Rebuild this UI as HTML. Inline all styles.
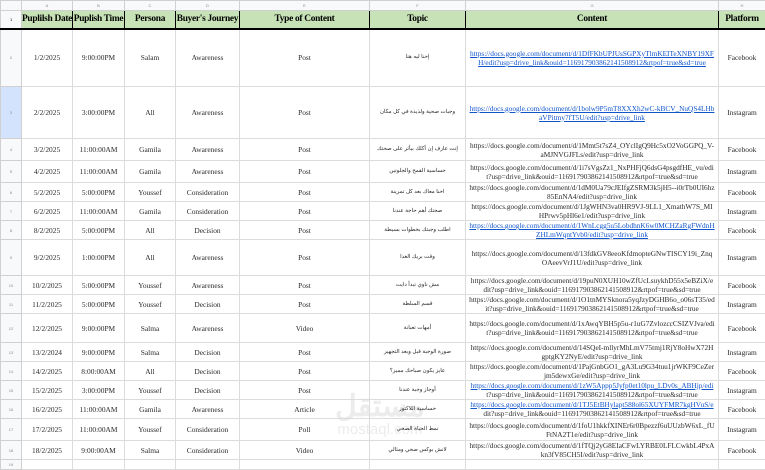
<!DOCTYPE html>
<html><head><meta charset="utf-8"><style>
*{margin:0;padding:0;box-sizing:border-box}
body{width:765px;height:448px;overflow:hidden;background:#fff;font-family:"Liberation Serif","Noto Serif CJK SC",serif;position:relative}
table{border-collapse:collapse;table-layout:fixed;position:absolute;left:0;top:0;width:765px}
td{border:1px solid #dcdcdc;text-align:center;vertical-align:middle;font-size:7.4px;color:#2a2a2a;overflow:hidden;padding:0 2px;line-height:9px;white-space:nowrap}
tr.let td{height:8px;background:#f8f9fa;font-size:4px;color:#888;font-family:"Liberation Sans",sans-serif;border-color:#d0d0d0}
td.n{background:#f8f9fa;font-size:4px;color:#888;font-family:"Liberation Sans",sans-serif;border-color:#d0d0d0}
tr.h td{height:18px;background:#c7e2b6;font-weight:bold;font-size:9.4px;letter-spacing:-0.3px;color:#000;border:1px solid #000;border-bottom:2px solid #000;white-space:nowrap;padding:0}
tr.h td.n{background:#f8f9fa;border:1px solid #d0d0d0;border-bottom:2px solid #000;font-weight:normal;font-size:4px}
td.u{word-break:break-all;white-space:normal;font-size:7.3px;padding:0 3px;line-height:9px}
td.u a{color:#1155cc;text-decoration:underline}
td.ar{font-family:"Liberation Sans","Noto Sans CJK SC",sans-serif;font-size:5.5px;direction:rtl;white-space:nowrap}
.wm{position:absolute;left:335px;top:392px;color:#ececec;font-family:"Liberation Sans","Noto Sans CJK SC",sans-serif;text-align:center;line-height:1;z-index:-1}
</style></head><body>
<div class="wm"><div style="font-size:30px;font-weight:bold">مستقل</div><div style="font-size:15px">mostaql.com</div></div>
<table>
<colgroup><col style="width:21px"><col style="width:51px"><col style="width:52px"><col style="width:51px"><col style="width:64px"><col style="width:130px"><col style="width:96px"><col style="width:253px"><col style="width:47px"></colgroup>
<tr class="let"><td></td><td>A</td><td>B</td><td>C</td><td>D</td><td>E</td><td>F</td><td>G</td><td>H</td></tr>
<tr class="h"><td class="n">1</td><td>Puplilsh Date</td><td>Puplish Time</td><td>Persona</td><td>Buyer's Journey</td><td>Type of Content</td><td>Topic</td><td>Content</td><td>Platform</td></tr>
<tr style="height:58px"><td class="n">2</td><td>1/2/2025</td><td>9:00:00PM</td><td>Salam</td><td>Awareness</td><td>Post</td><td class="ar">إحنا ليه هنا</td><td class="u"><a>https://docs.google.com/document/d/1DfFKbUPJUsSGPXyTlmKEITeXNBY19XFH/edit?usp=drive_link&amp;ouid=116917903862141508912&amp;rtpof=true&amp;sd=true</a></td><td>Facebook</td></tr>
<tr style="height:52px"><td class="n" style="background:#d3e3fd">3</td><td>2/2/2025</td><td>3:00:00PM</td><td>All</td><td>Awareness</td><td>Post</td><td class="ar">وجبات صحية ولذيذة في كل مكان</td><td class="u"><a>https://docs.google.com/document/d/1bolw9P5mT8XXXh2wC-kBCV_NuQS4LHbaVPitmy7fT5U/edit?usp=drive_link</a></td><td>Instagram</td></tr>
<tr style="height:22px"><td class="n">4</td><td>3/2/2025</td><td>11:00:00AM</td><td>Gamila</td><td>Awareness</td><td>Post</td><td class="ar">إنت عارف إن أكلك بيأثر على صحتك</td><td class="u">https://docs.google.com/document/d/1Mmt5t7sZ4_OYclIgQ9Hc5xO2VoGGPQ_V-aMJNVGJFLs/edit?usp=drive_link</td><td>Facebook</td></tr>
<tr style="height:22px"><td class="n">5</td><td>4/2/2025</td><td>11:00:00AM</td><td>Gamila</td><td>Awareness</td><td>Post</td><td class="ar">حساسية القمح والجلوتين</td><td class="u">https://docs.google.com/document/d/1i7sVgsZz1_NxPHFjQ6dsG4psgdfHE_vu/edit?usp=drive_link&amp;ouid=116917903862141508912&amp;rtpof=true&amp;sd=true</td><td>Instagram</td></tr>
<tr style="height:18px"><td class="n">6</td><td>5/2/2025</td><td>5:00:00PM</td><td>Youssef</td><td>Consideration</td><td>Post</td><td class="ar">احنا معاك بعد كل تمرينة</td><td class="u">https://docs.google.com/document/d/1dM0Ua79cJEIfgZSRM3k5jH5--i0rTb0UI6hz85EnNA4/edit?usp=drive_link</td><td>Facebook</td></tr>
<tr style="height:18px"><td class="n">7</td><td>6/2/2025</td><td>11:00:00AM</td><td>Gamila</td><td>Consideration</td><td>Post</td><td class="ar">صحتك أهم حاجة عندنا</td><td class="u">https://docs.google.com/document/d/1JgWHN3va0HR9VJ-9LL1_XmathW7S_MIHPrwv5pHl6e1/edit?usp=drive_link</td><td>Instagram</td></tr>
<tr style="height:17px"><td class="n">8</td><td>8/2/2025</td><td>5:00:00PM</td><td>All</td><td>Decision</td><td>Post</td><td class="ar">اطلب وجبتك بخطوات بسيطة</td><td class="u"><a>https://docs.google.com/document/d/1WnLcgg5u5LobdhnK6w0MCHZaRgFWdnHZHLmWqntYvb0/edit?usp=drive_link</a></td><td>Facebook</td></tr>
<tr style="height:36px"><td class="n">9</td><td>9/2/2025</td><td>1:00:00PM</td><td>All</td><td>Awareness</td><td>Post</td><td class="ar">وقت بريك الغدا</td><td class="u">https://docs.google.com/document/d/13fdkGV8eeoKfdmopteGNwTISCY19i_ZnqOAeevVrJ1U/edit?usp=drive_link</td><td>Instagram</td></tr>
<tr style="height:18px"><td class="n">10</td><td>10/2/2025</td><td>5:00:00PM</td><td>Youssef</td><td>Awareness</td><td>Post</td><td class="ar">مش ناوي تبدأ دايت</td><td class="u">https://docs.google.com/document/d/19puN0XUH10wZfUcLsuykhD55x5eBZiX/edit?usp=drive_link&amp;ouid=116917903862141508912&amp;rtpof=true&amp;sd=true</td><td>Facebook</td></tr>
<tr style="height:18px"><td class="n">11</td><td>11/2/2025</td><td>5:00:00PM</td><td>Youssef</td><td>Decision</td><td>Post</td><td class="ar">قسم السلطة</td><td class="u">https://docs.google.com/document/d/1O1tnMYSknora5yqJzyDGHB6o_o06sT35/edit?usp=drive_link&amp;ouid=116917903862141508912&amp;rtpof=true&amp;sd=true</td><td>Instagram</td></tr>
<tr style="height:29px"><td class="n">12</td><td>12/2/2025</td><td>9:00:00PM</td><td>Salma</td><td>Awareness</td><td>Video</td><td class="ar">أمهات تعبانة</td><td class="u">https://docs.google.com/document/d/1xAwqYBH5p5u-r1uG7ZvlozccCSIZVJva/edit?usp=drive_link&amp;ouid=116917903862141508912&amp;rtpof=true&amp;sd=true</td><td>Facebook</td></tr>
<tr style="height:18px"><td class="n">13</td><td>13/2/2024</td><td>9:00:00PM</td><td>Salma</td><td>Decision</td><td>Post</td><td class="ar">صورة الوجبة قبل وبعد التجهيز</td><td class="u">https://docs.google.com/document/d/14SQeI-mllyrMhLmV75tmj1RjY8oHwX72HgptgKY2NyE/edit?usp=drive_link</td><td>Instagram</td></tr>
<tr style="height:18px"><td class="n">14</td><td>14/2/2025</td><td>8:00:00AM</td><td>All</td><td>Decision</td><td>Post</td><td class="ar">عايز يكون صباحك مميز؟</td><td class="u">https://docs.google.com/document/d/1PajGnbGO1_gA3Lu9G34tuu1jrWKF9CeZerjm5dewxGe/edit?usp=drive_link</td><td>Facebook</td></tr>
<tr style="height:18px"><td class="n">15</td><td>15/2/2025</td><td>3:00:00PM</td><td>Youssef</td><td>Decision</td><td>Post</td><td class="ar">أوجاز وجبة عندنا</td><td class="u"><a>https://docs.google.com/document/d/1zW5Appp5Jyfp0et10lpu_LDv0s_ABHjp/edi</a>t?usp=drive_link&amp;ouid=116917903862141508912&amp;rtpof=true&amp;sd=true</td><td>Instagram</td></tr>
<tr style="height:18px"><td class="n">16</td><td>16/2/2025</td><td>11:00:00AM</td><td>Gamila</td><td>Awareness</td><td>Article</td><td class="ar">حساسية اللاكتوز</td><td class="u"><a>https://docs.google.com/document/d/1TJ5EtBHylapt588ol65XUYFMR7kgHVuS/e</a>dit?usp=drive_link&amp;ouid=116917903862141508912&amp;rtpof=true&amp;sd=true</td><td>Facebook</td></tr>
<tr style="height:22px"><td class="n">17</td><td>17/2/2025</td><td>11:00:00AM</td><td>Youssef</td><td>Consideration</td><td>Poll</td><td class="ar">نمط الحياة الصحي</td><td class="u">https://docs.google.com/document/d/1foU1hkkfXINEr6r0Bpezzf6uUUzbW6xL_fUFtNA2T1e/edit?usp=drive_link</td><td>Instagram</td></tr>
<tr style="height:18px"><td class="n">18</td><td>18/2/2025</td><td>9:00:00AM</td><td>Salma</td><td>Consideration</td><td>Video</td><td class="ar">لانش بوكس صحي ومثالي</td><td class="u">https://docs.google.com/document/d/1fTQj2yG8EIaCFwLYRBE0LFLCwkbL4PxAkn3fV85CH5I/edit?usp=drive_link</td><td>Facebook</td></tr>
<tr style="height:10px"><td class="n">19</td><td></td><td></td><td></td><td></td><td></td><td></td><td></td><td></td></tr>
</table>
</body></html>
